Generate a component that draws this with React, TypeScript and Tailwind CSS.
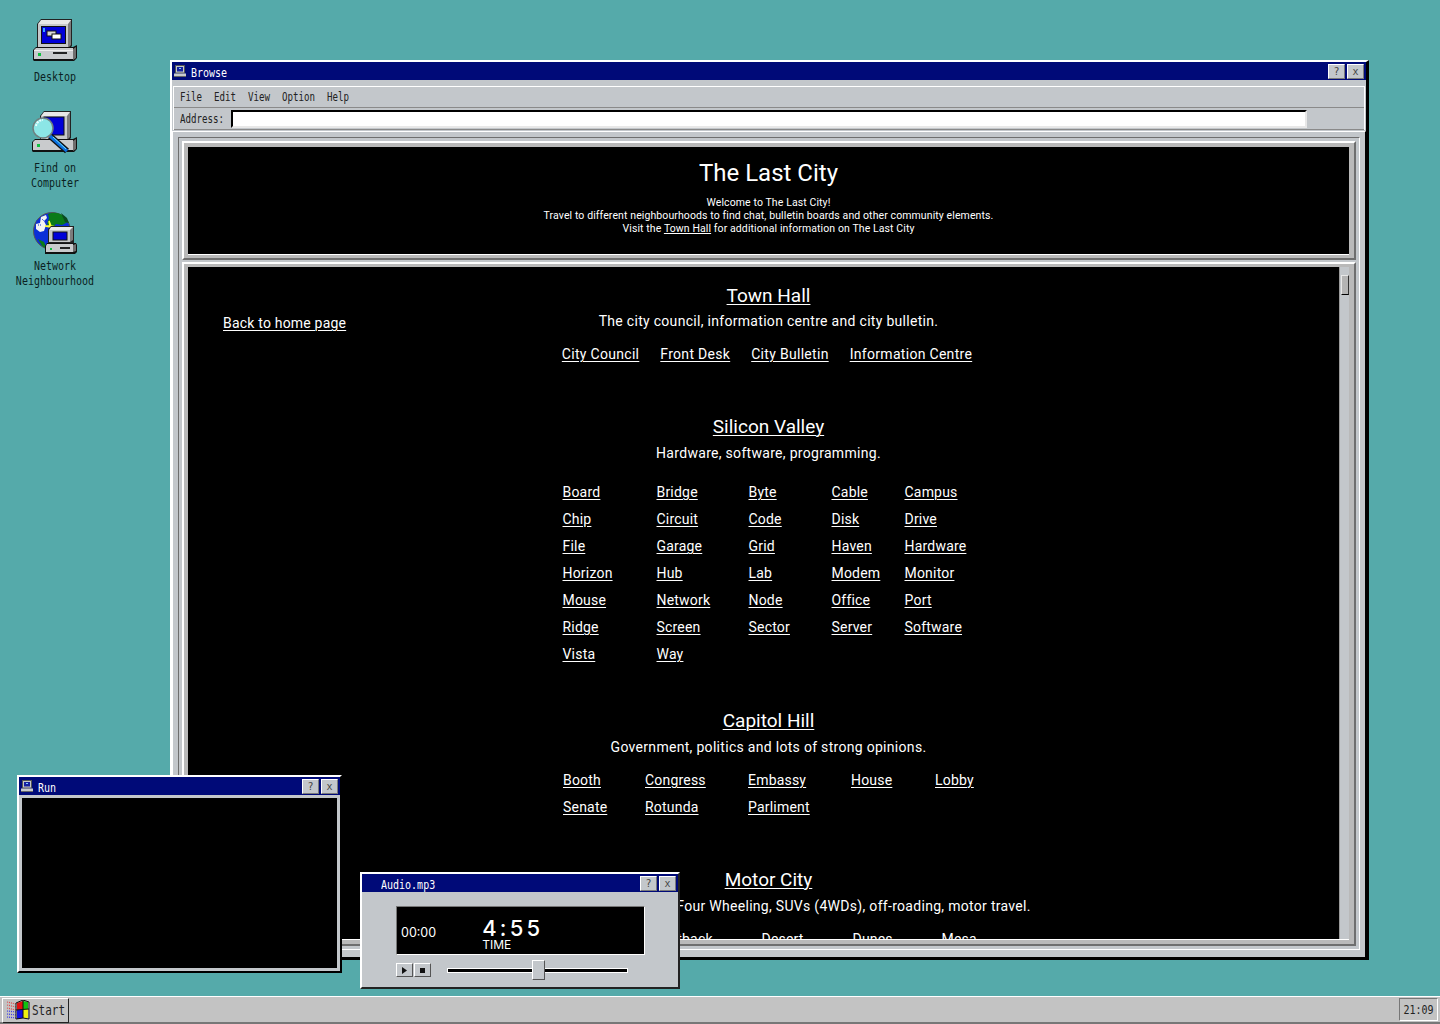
const sysFont = 'font-["DejaVu_Sans_Mono",monospace] text-[10px]';
const webFont = 'font-["Roboto",sans-serif]';
const baseLink = 'text-white underline underline-offset-2 decoration-1';
const linkClass = `${baseLink} tracking-[0.2px]`;
const headingClass = `${baseLink} tracking-normal text-[19px] leading-[24px]`;

function ComputerBase() {
    return (
        <g>
            <path d="M0 32l3-3h37l4-2v13l-3 3H1l-1-1z" fill="#111" />
            <path d="M1 32l2-2h37v11H1z" fill="#c9cbcd" />
            <path d="M1 32h39v1H1z" fill="#eee" />
            <path d="M40 31l3-2v11l-3 2z" fill="#6e6e6e" />
            <rect x="5" y="35" width="3" height="3" fill="#10c040" />
            <rect x="20" y="34" width="14" height="2" fill="#222" />
        </g>
    );
}

function DesktopIcon() {
    return (
        <svg width="44" height="44" viewBox="0 0 44 44">
            <path d="M4 6l4-5h31v27l-3 3H4z" fill="#222" />
            <path d="M5 6l3-4h30v4z" fill="#e8e8e8" />
            <path d="M5 6h30v24H5z" fill="#c6c8ca" />
            <path d="M35 6l3-4v25l-3 3z" fill="#7c7c7c" />
            <rect x="8" y="8" width="25" height="18" fill="#111" />
            <rect x="9" y="9" width="23" height="16" fill="#0000d8" />
            <rect x="10" y="10" width="2" height="4" fill="#39a7ff" />
            <rect x="14" y="13" width="9" height="5" fill="#d8d8d8" stroke="#111" strokeWidth="1" />
            <rect x="19" y="16" width="9" height="5" fill="#fff" stroke="#111" strokeWidth="1" />
            <ComputerBase />
        </svg>
    );
}

function FindIcon() {
    return (
        <svg width="46" height="44" viewBox="0 0 46 44">
            <path d="M8 6l4-5h27v27l-3 3H8z" fill="#222" />
            <path d="M9 6l3-4h26v4z" fill="#e8e8e8" />
            <path d="M9 6h26v24H9z" fill="#c6c8ca" />
            <path d="M35 6l3-4v25l-3 3z" fill="#7c7c7c" />
            <rect x="12" y="7" width="20" height="18" fill="#0000d8" stroke="#111" />
            <path d="M0 32l3-3h38l4-2v12l-3 3H1l-1-1z" fill="#111" />
            <path d="M1 32l2-2h38v10H1z" fill="#c9cbcd" />
            <path d="M41 31l3-2v10l-3 2z" fill="#6e6e6e" />
            <rect x="5" y="34" width="3" height="3" fill="#10c040" />
            <path d="M18 26l17 15" stroke="#111" strokeWidth="6" />
            <path d="M18 26l17 15" stroke="#0a6fe0" strokeWidth="3.5" />
            <path d="M21 27l13 12" stroke="#6fe0ff" strokeWidth="1" />
            <circle cx="11" cy="18" r="10" fill="#8ce6e6" stroke="#6f7f7f" strokeWidth="1.5" />
            <path d="M4 16a7 7 0 0 1 7-6" stroke="#e8ffff" strokeWidth="2" fill="none" strokeDasharray="2 1" />
        </svg>
    );
}

function NetworkIcon() {
    return (
        <svg width="44" height="44" viewBox="0 0 44 44">
            <circle cx="19" cy="20" r="18.5" fill="#0b2fd8" stroke="#555" strokeWidth="1" />
            <path d="M15 3c8-3 16 0 20 8l-6 3-6-1-4 5-5-5 2-6z" fill="#0a7a18" />
            <path d="M28 2l6 5 2 5-4-1z" fill="#0a4a20" />
            <path d="M8 6l5-2 1 3-3 3 2 4-2 6-4 1-4-3 0-5 4-1z" fill="#f2f2f2" />
            <path d="M3 10l4 1M5 14l3 0M9 8l2 2" stroke="#0b2fd8" strokeWidth="1" strokeDasharray="1 1" />
            <path d="M5 28l6 3 3 7-5-3z" fill="#0a7a18" />
            <path d="M16 10l1 5-5 0 5 1 0 5 1-5 5 0-5-1z" fill="#ffff30" stroke="#ffff30" strokeWidth="1.5" />
            <path d="M15 18l3-3h23v17H15z" fill="#222" />
            <path d="M16 19l2-3h22v3z" fill="#ececec" />
            <rect x="16" y="19" width="21" height="12" fill="#c6c8ca" />
            <path d="M37 19l3-3v13l-3 2z" fill="#7c7c7c" />
            <rect x="20" y="21" width="14" height="8" fill="#0000d8" stroke="#111" />
            <path d="M12 35l2-3h29l1 2v7l-2 2H12z" fill="#111" />
            <path d="M13 35l1-2h26v8H13z" fill="#c9cbcd" />
            <path d="M40 34l3-1v7l-3 1z" fill="#6e6e6e" />
            <rect x="17" y="37" width="2" height="2" fill="#10c040" />
            <rect x="27" y="36" width="10" height="2" fill="#222" />
        </svg>
    );
}

function TitleIcon() {
    return (
        <svg width="12" height="12" viewBox="0 0 12 12">
            <rect x="1.5" y="0.5" width="9" height="7.5" fill="#c6c8ca" stroke="#555" strokeWidth="1" />
            <rect x="3" y="2" width="6" height="4.5" fill="#1620a0" />
            <rect x="5" y="3" width="2" height="1" fill="#7fd0ff" />
            <rect x="0" y="8.5" width="12" height="3" fill="#c9cbcd" />
            <rect x="0" y="11" width="12" height="1" fill="#666" />
        </svg>
    );
}

function StartLogo() {
    return (
        <svg width="24" height="20" viewBox="0 0 24 20">
            <path d="M1 2l9 2M1 5l9 2M1 8l9 2" stroke="#e04848" strokeWidth="1.2" strokeDasharray="1 1" />
            <path d="M1 11l9 1M1 14l9 1M1 17l9 1" stroke="#3a3ae8" strokeWidth="1.2" strokeDasharray="1 1" />
            <path d="M11 3l6-2v8l-6 1z" fill="#e01010" />
            <path d="M17 1l5 1v7h-5z" fill="#10c010" />
            <path d="M11 10l6-1v9l-6 1z" fill="#1010e0" />
            <path d="M17 9h5v9h-5z" fill="#f0f010" />
            <path d="M10 3l7-3 6 2v17l-6-1-7 1zM17 0v18M10 10l13-1" stroke="#111" strokeWidth="1" fill="none" />
        </svg>
    );
}

function CaptionButton({ label }: { label: string }) {
    return (
        <div className={`w-[17px] h-[15px] flex items-center justify-center bg-[#c3c7cb] border-t border-l border-white border-r border-b border-r-[#7a7a7a] border-b-[#7a7a7a] text-[#444] ${sysFont}`}>
            {label}
        </div>
    );
}

function TitleBar({ title, icon }: { title: string; icon?: boolean }) {
    return (
        <div className={`h-[18px] shrink-0 bg-[#000a78] flex items-center pl-[1px] pr-[2px] ${sysFont} text-white`}>
            <div className="w-[14px] flex justify-center">{icon && <TitleIcon />}</div>
            <span className="ml-[4px] flex-1 pt-[3px]">
                <span className="inline-block scale-y-[1.25]">{title}</span>
            </span>
            <div className="flex gap-[2px]">
                <CaptionButton label="?" />
                <CaptionButton label="x" />
            </div>
        </div>
    );
}

function LinkGrid({ columns, items }: { columns: string; items: string[] }) {
    return (
        <div className={`grid ${columns} auto-rows-[27px] text-[14px]`}>
            {items.map((item) => (
                <a key={item} className={`${linkClass} justify-self-start`}>{item}</a>
            ))}
        </div>
    );
}

const siliconValley = [
    'Board', 'Bridge', 'Byte', 'Cable', 'Campus',
    'Chip', 'Circuit', 'Code', 'Disk', 'Drive',
    'File', 'Garage', 'Grid', 'Haven', 'Hardware',
    'Horizon', 'Hub', 'Lab', 'Modem', 'Monitor',
    'Mouse', 'Network', 'Node', 'Office', 'Port',
    'Ridge', 'Screen', 'Sector', 'Server', 'Software',
    'Vista', 'Way',
];

const capitolHill = ['Booth', 'Congress', 'Embassy', 'House', 'Lobby', 'Senate', 'Rotunda', 'Parliment'];

function Browser() {
    return (
        <div className="absolute left-[170px] top-[60px] w-[1199px] h-[900px] flex flex-col bg-[#c3c7cb] border-t-2 border-l-2 border-white border-r-[3px] border-b-[3px] border-r-black border-b-black">
            <TitleBar title="Browse" icon />
            <div className="mt-[6px] mx-[1px] border-t border-l border-white border-r font-['DejaVu_Sans_Mono',monospace] text-[9.15px] text-[#222]">
                <div className="h-[21px] flex items-center gap-[12px] pl-[6px] pt-[2px] border-b border-[#8a8a8a]">
                    {['File', 'Edit', 'View', 'Option', 'Help'].map((m) => (
                        <span key={m} className="inline-block scale-y-[1.25]">{m}</span>
                    ))}
                </div>
                <div className="h-[22px] flex items-start pt-[2px] pl-[6px] border-b border-[#8a8a8a]">
                    <span className="mt-[3px] inline-block scale-y-[1.25]">Address:</span>
                    <div className="ml-[7px] w-[1076px] h-[18px] bg-white border-t-2 border-l-2 border-t-black border-l-black border-r-2 border-b-2 border-r-[#e8e8e8] border-b-[#e8e8e8]" />
                </div>
            </div>
            <div className="flex-1 min-h-0 mt-[1px] border-t border-l border-white border-r border-r-black flex flex-col pt-[5px] pl-[5px] pr-[5px] pb-[7px]">
                <div className="flex-1 min-h-0 border-t border-l border-[#6e6e6e] border-r border-r-white border-b border-b-white pt-[3px] pl-[3px] pr-[3px] pb-[3px] flex flex-col gap-[2px]">
                    <div className="h-[119px] shrink-0 bg-[#b9b9b9] border-t-2 border-l-2 border-white border-r-2 border-b-2 border-r-[#6e6e6e] border-b-[#6e6e6e] pt-[4px] pl-[4px] pr-[5px] pb-[3px]">
                        <div className="h-full bg-black text-white flex flex-col items-center pt-[12px] border-b border-white">
                            <h1 className={`${webFont} text-[24px] leading-[28px]`}>The Last City</h1>
                            <div className={`${webFont} text-[10.5px] leading-[13px] tracking-[0.1px] text-center mt-[9px]`}>
                                <p>Welcome to The Last City!</p>
                                <p>Travel to different neighbourhoods to find chat, bulletin boards and other community elements.</p>
                                <p>Visit the <a className="underline">Town Hall</a> for additional information on The Last City</p>
                            </div>
                        </div>
                    </div>
                    <div className="flex-1 min-h-0 bg-[#b9b9b9] border-t-2 border-l-2 border-white border-r-2 border-b-2 border-r-[#6e6e6e] border-b-[#6e6e6e] pt-[3px] pl-[4px] pr-[5px] pb-[4px]">
                        <div className={`relative h-full bg-black text-white overflow-hidden border-b border-white grid grid-cols-[1fr_480px_1fr] ${webFont}`}>
                            <div className="pl-[35px] pt-[46px] text-[14px]">
                                <a className={linkClass}>Back to home page</a>
                            </div>
                            <div className="flex flex-col items-center pt-[17px] tracking-[0.3px]">
                                <a className={headingClass}>Town Hall</a>
                                <p className="text-[14px] leading-[20px] mt-[3px]">The city council, information centre and city bulletin.</p>
                                <div className="flex gap-[21px] text-[14px] mt-[13px] ml-[-3px]">
                                    {['City Council', 'Front Desk', 'City Bulletin', 'Information Centre'].map((l) => (
                                        <a key={l} className={baseLink}>{l}</a>
                                    ))}
                                </div>

                                <a className={`${headingClass} mt-[50px]`}>Silicon Valley</a>
                                <p className="text-[14px] leading-[20px] mt-[4px]">Hardware, software, programming.</p>
                                <div className="mt-[19px]">
                                    <LinkGrid columns="grid-cols-[94px_92px_83px_73px_70px]" items={siliconValley} />
                                </div>

                                <a className={`${headingClass} mt-[38px]`}>Capitol Hill</a>
                                <p className="text-[14px] leading-[20px] mt-[4px]">Government, politics and lots of strong opinions.</p>
                                <div className="mt-[13px] ml-[5px]">
                                    <LinkGrid columns="grid-cols-[82px_103px_103px_84px_44px]" items={capitolHill} />
                                </div>

                                <a className={`${headingClass} mt-[44px]`}>Motor City</a>
                                <p className="text-[14px] leading-[20px] mt-[4px] ml-[170px] whitespace-nowrap">Four Wheeling, SUVs (4WDs), off-roading, motor travel.</p>
                                <div className="mt-[13px] ml-[124px]">
                                    <LinkGrid columns="grid-cols-[102px_91px_89px_60px]" items={['Outback', 'Desert', 'Dunes', 'Mesa']} />
                                </div>
                            </div>
                            <div />
                            {/* scrollbar track overlays the right edge of the frame */}
                            <div className="absolute right-0 top-0 bottom-0 w-[10px] bg-[#c3c7cb] border-l border-[#9a9a9a] pl-[1px] pt-[8px]">
                                <div className="w-[8px] h-[20px] bg-[#b4b4b4] border-t border-l border-[#e8e8e8] border-r border-b border-r-[#333] border-b-black" />
                            </div>
                        </div>
                    </div>
                </div>
            </div>
        </div>
    );
}

function RunWindow() {
    return (
        <div className="absolute left-[17px] top-[775px] w-[325px] h-[198px] flex flex-col bg-[#c3c7cb] border-t-2 border-l-2 border-white border-r-2 border-b-2 border-r-black border-b-black">
            <TitleBar title="Run" icon />
            <div className="flex-1 bg-black m-[3px]" />
        </div>
    );
}

function AudioWindow() {
    return (
        <div className="absolute left-[360px] top-[872px] w-[320px] h-[117px] flex flex-col bg-[#c3c7cb] border-t-2 border-l-2 border-white border-r-2 border-b-2 border-r-[#222] border-b-[#222]">
            <TitleBar title="Audio.mp3" />
            <div className="pl-[34px] pt-[14px]">
                <div className="w-[249px] h-[49px] bg-black text-white flex items-center border-t border-l border-[#777] border-r border-b border-r-white border-b-white font-['Inter',sans-serif]">
                    <span className="ml-[4px] text-[12.5px] mt-[6px]">00:00</span>
                    <div className="ml-[46px] flex flex-col mt-[6px]">
                        <span className="text-[22px] leading-[22px] font-medium tracking-[3.2px]">4:55</span>
                        <span className="text-[12px] leading-[11px]">TIME</span>
                    </div>
                </div>
                <div className="flex items-center mt-[5px] h-[20px]">
                    <div className="flex gap-[1px]">
                        <div className="w-[17px] h-[14px] flex items-center justify-center bg-[#c3c7cb] border-t border-l border-white border-r border-b border-r-[#555] border-b-[#555]">
                            <svg width="5" height="7" viewBox="0 0 5 7"><path d="M0 0l5 3.5L0 7z" fill="#111" /></svg>
                        </div>
                        <div className="w-[17px] h-[14px] flex items-center justify-center bg-[#c3c7cb] border-t border-l border-white border-r border-b border-r-[#555] border-b-[#555]">
                            <div className="w-[5px] h-[5px] bg-[#111]" />
                        </div>
                    </div>
                    <div className="relative ml-[16px] w-[181px] h-[5px] bg-black border border-white">
                        <div className="absolute left-[84px] top-[-9px] w-[13px] h-[20px] bg-[#c3c7cb] border-t border-l border-white border-r border-b border-r-[#555] border-b-[#555]" />
                    </div>
                </div>
            </div>
        </div>
    );
}

function Taskbar() {
    return (
        <div className="absolute left-0 right-0 bottom-0 h-[28px] bg-[#c3c3c3] border-t border-white border-b-2 border-b-[#777] flex items-center justify-between pl-[2px] pr-[2px]">
            <div className="w-[67px] h-[25px] mt-[1px] flex items-center gap-[2px] pl-[3px] border-t border-l border-white border-r border-b border-r-[#222] border-b-[#222]">
                <StartLogo />
                <span className="inline-block scale-y-[1.2] font-['DejaVu_Sans_Mono',monospace] text-[11px] leading-none text-[#222]">Start</span>
            </div>
            <div className={`w-[39px] h-[23px] flex items-center justify-center border-t border-l border-[#777] border-r border-b border-r-white border-b-white ${sysFont} text-[#222]`}>
                <span className="inline-block scale-y-[1.25]">21:09</span>
            </div>
        </div>
    );
}

export default function App() {
    return (
        <div className="relative w-[1440px] h-[1024px] bg-[#55aaaa] overflow-hidden">
            <div className={`w-[110px] flex flex-col items-center pt-[18px] ${sysFont} text-[#0b1f22] leading-[12px] text-center`}>
                <DesktopIcon />
                <span className="mt-[9px] inline-block scale-y-[1.25]">Desktop</span>
                <div className="mt-[27px]"><FindIcon /></div>
                <span className="mt-[10px] inline-block scale-y-[1.25]">Find on<br />Computer</span>
                <div className="mt-[23px]"><NetworkIcon /></div>
                <span className="mt-[7px] inline-block scale-y-[1.25]">Network<br />Neighbourhood</span>
            </div>
            <Browser />
            <RunWindow />
            <AudioWindow />
            <Taskbar />
        </div>
    );
}
